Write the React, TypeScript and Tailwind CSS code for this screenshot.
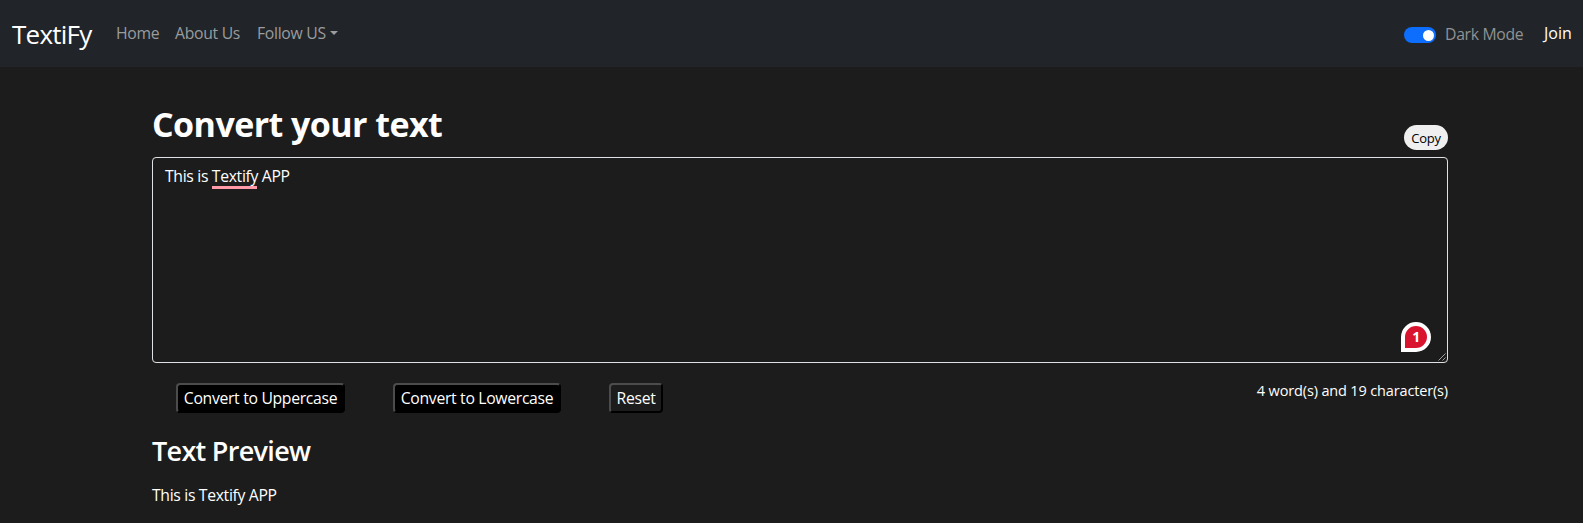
import type { ReactNode } from 'react';

const navLink = 'block px-2 text-[15.75px] leading-6 tracking-[-0.3px] whitespace-nowrap text-[#9a9c9e]';

function ActionButton({ children, className }: { children: ReactNode; className: string }) {
  return (
    <button
      type="button"
      className={`flex h-[30px] items-center justify-center rounded-[4px] border-2 border-t-[#4c4c4c] border-l-[#4c4c4c] border-r-black border-b-black pb-px text-[15.75px] leading-6 tracking-[-0.32px] whitespace-nowrap text-white ${className}`}
    >
      {children}
    </button>
  );
}

function Navbar() {
  return (
    <nav className="flex h-[67px] items-center bg-[#212529] pr-[11px] pl-3">
      <a className="mr-4 w-20 text-[26px] leading-[42px] tracking-[-0.75px] whitespace-nowrap text-white">TextiFy</a>
      <ul className="flex pb-[2px]">
        <li><a className={`${navLink} w-[59px]`}>Home</a></li>
        <li><a className={`${navLink} w-[82px]`}>About Us</a></li>
        <li>
          <a className={`${navLink} flex items-center`}>
            <span className="w-[73px]">Follow US</span>
            <span className="mt-px border-x-[4.5px] border-t-[4.5px] border-x-transparent border-t-[#9a9c9e]" />
          </a>
        </li>
      </ul>
      <div className="ml-auto flex items-center">
        <span className="mt-[3px] mr-2 flex h-4 w-8 items-center justify-end rounded-full bg-[#0d6efd] pr-[2.5px]">
          <span className="size-[11px] rounded-full bg-white" />
        </span>
        <label className="w-[100px] pl-px text-[15.75px] leading-6 tracking-[-0.3px] whitespace-nowrap text-[#909294]">Dark Mode</label>
        <a className="w-7 pb-[2px] text-base leading-6 whitespace-nowrap text-white">Join</a>
      </div>
    </nav>
  );
}

export default function App() {
  return (
    <div className="h-[523px] overflow-hidden bg-[#1c1c1c] font-['Open_Sans','Noto_Sans',sans-serif] text-white">
      <Navbar />
      <main className="ml-[152px] w-[1296px]">
        <div className="flex h-[90px] items-end justify-between">
          <h1 className="pb-[9px] text-[34px] leading-[48px] font-bold tracking-[-0.56px]">Convert your text</h1>
          <button type="button" className="mb-[7px] flex h-[25px] w-11 items-center justify-center rounded-full bg-[#efefef] text-[13px] leading-5 tracking-[-0.2px] text-black">
            Copy
          </button>
        </div>
        <div className="relative h-[206px] rounded-[4px] border border-[#dee2e6] px-3 py-[6px] text-[15.75px] leading-6 tracking-[-0.33px]">
          This is <span className="relative inline-block">Textify<span className="absolute top-[22px] left-0 h-[3px] w-[45px] bg-[#ff9aa8]" /></span> APP
          <span className="absolute right-4 bottom-[10px] flex size-[30px] items-center justify-center rounded-full rounded-bl-none border-4 border-white bg-[#d9142f] text-[14px] leading-none font-bold">
            1
          </span>
          <svg className="absolute right-px bottom-px" width="8" height="8" viewBox="0 0 8 8" fill="none" stroke="#a0a0a0">
            <path d="M0.5 7.5l7-7M4.5 7.5l3-3" />
          </svg>
        </div>
        <div className="flex h-[70px] items-start pt-5 pl-6">
          <ActionButton className="w-[169px] bg-black">Convert to Uppercase</ActionButton>
          <ActionButton className="ml-12 w-[168px] bg-black">Convert to Lowercase</ActionButton>
          <ActionButton className="ml-12 w-[54px] bg-[#1c1c1c]">Reset</ActionButton>
          <p className="-mt-[3px] ml-auto text-[14.5px] leading-[22px] tracking-[-0.15px]">4 word(s) and 19 character(s)</p>
        </div>
        <h2 className="text-[27px] leading-9 font-semibold tracking-[-0.7px]">Text Preview</h2>
        <p className="mt-[14px] text-[15.75px] leading-6 tracking-[-0.33px]">This is Textify APP</p>
      </main>
    </div>
  );
}
